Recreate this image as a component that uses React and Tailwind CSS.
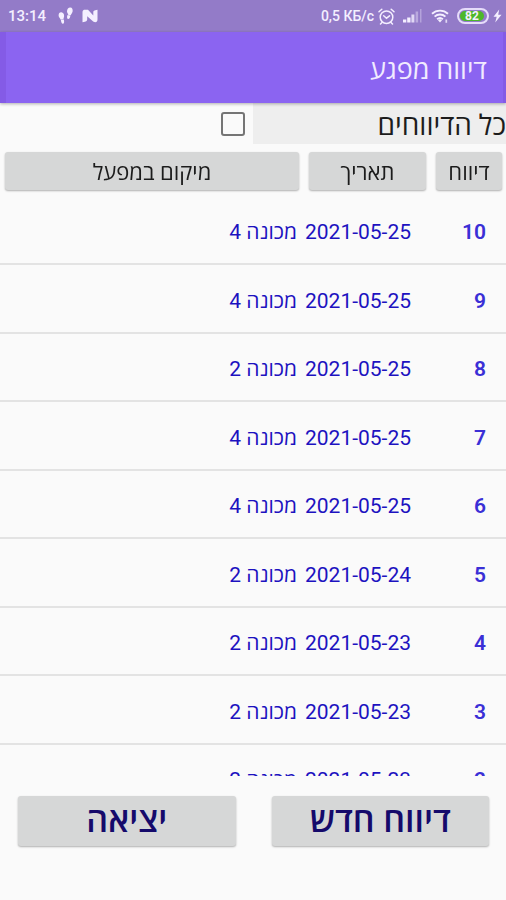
import React, { useState } from "react";
import { clsx } from "clsx";

const reports = [
  { id: 10, date: "2021-05-25", place: "מכונה 4" },
  { id: 9, date: "2021-05-25", place: "מכונה 4" },
  { id: 8, date: "2021-05-25", place: "מכונה 2" },
  { id: 7, date: "2021-05-25", place: "מכונה 4" },
  { id: 6, date: "2021-05-25", place: "מכונה 4" },
  { id: 5, date: "2021-05-24", place: "מכונה 2" },
  { id: 4, date: "2021-05-23", place: "מכונה 2" },
  { id: 3, date: "2021-05-23", place: "מכונה 2" },
  { id: 2, date: "2021-05-23", place: "מכונה 2" },
];

// --- Status bar icons ---
const StepsIcon = () => (
  <svg width="16" height="18" viewBox="0 0 16 18" fill="currentColor" aria-hidden="true">
    <path d="M.6 8.500C.6 6.200 1.800 5.100 3.400 5.300c1.800.2 2.800 1.700 2.700 3.700-.1 1.400-.6 2.300-.7 3.300l-2.700.4C2.300 11.300.6 10.400.6 8.500z" />
    <path d="M2.900 13l2.900-.5c.5 1.800.5 4.100-.7 4.300-1.400.2-2.100-1.900-2.200-3.800z" />
    <path d="M9 4.200C9.100 2 10.500.4 12.300.5c1.900.1 2.700 1.800 2.300 3.900-.3 1.500-1.400 2.500-1.800 3.800l-2.800-.5c.1-1.300-1.100-2-1-3.500z" />
    <path d="M9.500 8.100l2.900.5c-.2 2-1.100 3.700-2.400 3.500-1.200-.2-1.100-2.300-.5-4z" />
  </svg>
);

const NIcon = () => (
  <svg width="16" height="14" viewBox="0 0 16 14" fill="currentColor" aria-hidden="true">
    <path d="M2 .8h4l5.300 5.700V3.500c0-1.500.6-2.300 4.200-2.700v9.500c0 1.600-.5 2.900-2.300 2.900-1.200 0-1.900-.4-2.600-1.100L5.200 7.300v3c0 1.600-.9 2.600-4.700 2.900V3.600C.5 2 .9 1.200 2 .8z" />
  </svg>
);

const AlarmIcon = () => (
  <svg width="17" height="17" viewBox="0 0 17 17" fill="none" stroke="currentColor" strokeWidth="1.500" strokeLinecap="round" aria-hidden="true">
    <circle cx="8.500" cy="9.200" r="6.300" />
    <path d="M5.700 7.800l2.800 2.400 3-2.400M1 3.700l2.800-2.500M16 3.700l-2.800-2.500M4 14.500l-1.500 1.500M13 14.500l1.500 1.500" />
  </svg>
);

const SignalIcon = () => (
  <svg width="20" height="14" viewBox="0 0 20 14" fill="currentColor" aria-hidden="true">
    <rect x="0" y="10.500" width="3.300" height="3" />
    <rect x="4.200" y="8.500" width="3.300" height="5" />
    <rect x="8.400" y="5.500" width="3" height="8" opacity="0.800" />
    <rect x="12.600" y="2.500" width="2.500" height="11" opacity="0.400" />
    <rect x="17" y="0" width="1.500" height="13.500" opacity="0.350" />
  </svg>
);

const WifiIcon = () => (
  <svg width="18" height="14" viewBox="0 0 18 14" fill="none" stroke="currentColor" strokeWidth="1.900" aria-hidden="true">
    <path d="M1 4.800c4.600-4.300 11.400-4.300 16 0M3.600 7.600c3.100-2.900 7.700-2.900 10.800 0M6.100 10.200c1.700-1.500 4.100-1.500 5.800 0" />
    <path d="M7 11.200a3 3 0 0 1 4 0l-2 2.200z" fill="currentColor" stroke="none" />
    <path d="M15.300 10.500v3.300" strokeWidth="1.700" opacity="0.800" />
  </svg>
);

const BoltIcon = () => (
  <svg width="9" height="14" viewBox="0 0 9 14" fill="currentColor" aria-hidden="true">
    <path d="M6.200.500L.5 7.800h3.200l-1.500 5.700L8.500 5.800H5.200z" />
  </svg>
);

const StatusBar = () => (
  <div dir="ltr" className="flex h-8 shrink-0 items-center justify-between bg-[#937bc8] pl-2 pr-1 text-[15px] font-medium text-[#f4efff]">
    <div className="flex items-center">
      <span>13:14</span>
      <span className="ml-3"><StepsIcon /></span>
      <span className="ml-2"><NIcon /></span>
    </div>
    <div className="flex items-center gap-1">
      <span className="text-sm">0,5 КБ/с</span>
      <AlarmIcon />
      <span className="ml-1"><SignalIcon /></span>
      <span className="ml-1"><WifiIcon /></span>
      <div className="ml-1 flex h-4 w-8 rounded-full border-2 border-[#e6dcfa] bg-[#937bc8] p-px">
        <span className="flex h-full w-6 items-center justify-center rounded-full bg-[#4db82a] text-xs font-bold leading-none">82</span>
      </div>
      <BoltIcon />
    </div>
  </div>
);

const GrayButton = ({ className, children }) => (
  <button
    type="button"
    className={clsx("rounded-[3px] bg-[#d6d7d7] shadow-[0_1px_2px_rgba(0,0,0,0.3)] active:bg-[#c4c5c5]", className)}
  >
    {children}
  </button>
);

const ReportTable = () => (
  <table className="w-full table-fixed border-collapse">
    <colgroup>
      <col className="w-[75px]" />
      <col className="w-[127px]" />
      <col />
    </colgroup>
    <thead className="sticky top-0 bg-[#fafafa] text-[22px] text-[#1c1c1c]">
      <tr className="h-[52px] align-top">
        <th className="pl-[5px] pr-1 pt-2 font-normal">
          <GrayButton className="h-[38px] w-full pt-0.5">דיווח</GrayButton>
        </th>
        <th className="px-[5px] pt-2 font-normal">
          <GrayButton className="h-[38px] w-full pt-0.5">תאריך</GrayButton>
        </th>
        <th className="px-[5px] pt-2 font-normal">
          <GrayButton className="h-[38px] w-full pt-0.5">מיקום במפעל</GrayButton>
        </th>
      </tr>
    </thead>
    <tbody className="text-[21px] text-[#1d12c0]">
      {reports.map((r) => (
        <tr key={r.id} className="h-[68px] border-b-2 border-[#e3e3e3] even:h-[69px]">
          <td className="pr-5 pt-1.5 font-semibold text-[#3a2fd6]">{r.id}</td>
          <td className="whitespace-nowrap pr-5 pt-1.5"><bdi>{r.date}</bdi></td>
          <td className="pr-[7px] pt-1.5">{r.place}</td>
        </tr>
      ))}
    </tbody>
  </table>
);

const App = () => {
  const [showAll, setShowAll] = useState(false);

  return (
    <div
      dir="rtl"
      className="flex h-screen flex-col bg-[#fafafa] font-['Roboto','Open_Sans','Noto_Sans','Liberation_Sans',sans-serif]"
    >
      <StatusBar />

      <header className="z-20 flex h-[71px] shrink-0 items-center border-l-[6px] border-r-[3px] border-[#845be6] bg-[#8b64f1] pr-4 pt-1.5 shadow-[0_1px_3px_rgba(0,0,0,0.3)]">
        <h1 className="text-[27px] text-[#f1ebff]">דיווח מפגע</h1>
      </header>

      {/* Filter */}
      <div className="flex h-[41px] shrink-0 items-center">
        <label htmlFor="all" className="flex h-full w-1/2 items-center bg-[#eeeeee] pt-1 text-[28px] text-[#1c1c1c]">
          כל הדיווחים
        </label>
        <input
          id="all"
          type="checkbox"
          checked={showAll}
          onChange={(e) => setShowAll(e.target.checked)}
          className="mr-2 size-6 appearance-none rounded-[3px] border-2 border-[#757575] checked:bg-[#8b64f1]"
        />
      </div>

      {/* Reports */}
      <main className="min-h-0 flex-1 overflow-y-auto [scrollbar-width:none]">
        <ReportTable />
      </main>

      <footer className="flex shrink-0 gap-9 pb-[54px] pl-[18px] pr-[17px] pt-5 text-[34px] font-semibold text-[#150a6b]">
        <GrayButton className="h-[50px] flex-1 pb-0.5 leading-none">דיווח חדש</GrayButton>
        <GrayButton className="h-[50px] flex-1 pb-0.5 leading-none">יציאה</GrayButton>
      </footer>
    </div>
  );
};

export default App;
